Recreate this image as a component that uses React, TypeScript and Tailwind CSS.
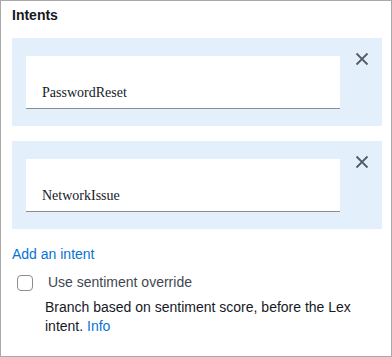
import React from "react";

function XIcon() {
  return (
    <svg width="14" height="14" viewBox="0 0 14 14" className="block">
      <path d="M1.5 1.5 L12.5 12.5 M12.5 1.5 L1.5 12.5" stroke="#545b64" strokeWidth="1.8" fill="none" />
    </svg>
  );
}

function IntentBox({ value }: { value: string }) {
  return (
    <div className="flex h-[88px] w-[370px] bg-[#e3f0fb] pl-[14px] pt-[18px]">
      <div className="flex h-[53px] w-[314px] items-end border-b border-[#8d8d8d] bg-white pb-[6px] pl-[16px]">
        <span className="text-[14px] leading-[18px] text-[#16191f]" style={{ fontFamily: '"Liberation Serif", serif' }}>
          {value}
        </span>
      </div>
      <div className="ml-[15px] mt-[-4px]">
        <XIcon />
      </div>
    </div>
  );
}

export default function App() {
  return (
    <div
      className="box-border h-[357px] w-[392px] border border-[#a9a9a9] bg-white pl-[11px] pt-[4px] text-[#16191f]"
      style={{ fontFamily: '"Liberation Sans", Arial, sans-serif' }}
    >
      <div className="text-[14px] font-bold leading-5">Intents</div>
      <div className="mt-[13px] flex flex-col gap-[15px]">
        <IntentBox value="PasswordReset" />
        <IntentBox value="NetworkIssue" />
      </div>
      <div className="mt-[15px] text-[14px] leading-5 text-[#0972d3]">Add an intent</div>
      <div className="mt-[8px] flex items-start">
        <div className="ml-[5px] mt-[3px] h-[16px] w-[16px] rounded-[4px] border border-[#8c8c94] bg-white" />
        <span className="ml-[15px] text-[14px] leading-5 text-[#414750]">Use sentiment override</span>
      </div>
      <div className="ml-[33px] mt-[6px] w-[320px] text-[14px] leading-[19px] text-[#16191f]">
        Branch based on sentiment score, before the Lex intent. <span className="text-[#0972d3]">Info</span>
      </div>
    </div>
  );
}
